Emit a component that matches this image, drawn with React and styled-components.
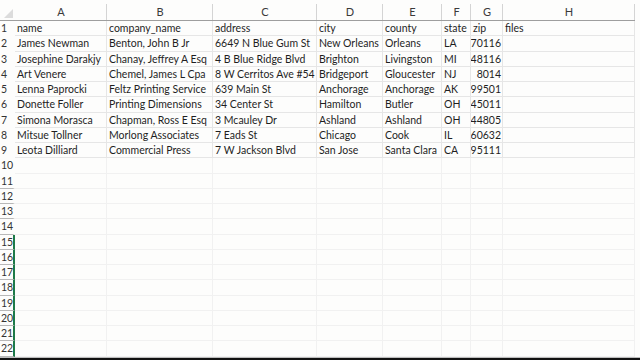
import React from "react";
import styled, {createGlobalStyle} from "styled-components";

const GlobalStyle = createGlobalStyle`
  html, body {
    margin: 0;
    padding: 0;
    background: #fdfdfc;
    overflow: hidden;
  }
`;

const COLS = ["A", "B", "C", "D", "E", "F", "G", "H"];
const WIDTHS = [92, 106, 104, 66, 59, 29, 32, 132];

const ROWS = [
    ["name", "company_name", "address", "city", "county", "state", "zip", "files"],
    ["James Newman", "Benton, John B Jr", "6649 N Blue Gum St", "New Orleans", "Orleans", "LA", 70116, ""],
    ["Josephine Darakjy", "Chanay, Jeffrey A Esq", "4 B Blue Ridge Blvd", "Brighton", "Livingston", "MI", 48116, ""],
    ["Art Venere", "Chemel, James L Cpa", "8 W Cerritos Ave #54", "Bridgeport", "Gloucester", "NJ", 8014, ""],
    ["Lenna Paprocki", "Feltz Printing Service", "639 Main St", "Anchorage", "Anchorage", "AK", 99501, ""],
    ["Donette Foller", "Printing Dimensions", "34 Center St", "Hamilton", "Butler", "OH", 45011, ""],
    ["Simona Morasca", "Chapman, Ross E Esq", "3 Mcauley Dr", "Ashland", "Ashland", "OH", 44805, ""],
    ["Mitsue Tollner", "Morlong Associates", "7 Eads St", "Chicago", "Cook", "IL", 60632, ""],
    ["Leota Dilliard", "Commercial Press", "7 W Jackson Blvd", "San Jose", "Santa Clara", "CA", 95111, ""],
];

const TOTAL_ROWS = 22;

const Page = styled.div`
  width: 640px;
  height: 360px;
  display: flex;
  flex-direction: column;
  font-family: Lato, "Open Sans", "Liberation Sans", sans-serif;
  color: #1f1f1f;
  background: #fdfdfc;
`;

const Sheet = styled.div`
  display: grid;
  grid-template-columns: 15px ${WIDTHS.map(w => `${w}px`).join(" ")};
  grid-template-rows: 21px repeat(${TOTAL_ROWS}, 15.25px);
  flex: 1;
  align-content: start;
`;

const Corner = styled.div`
  position: relative;
  border-bottom: 1px solid #9e9e9e;
  &::after {
    content: "";
    position: absolute;
    right: 2px;
    bottom: 2px;
    width: 0;
    height: 0;
    border-left: 9px solid transparent;
    border-bottom: 9px solid #dcdcdc;
  }
`;

const ColHead = styled.div`
  display: flex;
  align-items: center;
  justify-content: center;
  padding-top: 2px;
  font-size: 11px;
  color: #3a3a3a;
  border-bottom: 1px solid #9e9e9e;
  position: relative;
  &::after {
    content: "";
    position: absolute;
    right: 0;
    top: 4px;
    bottom: 0;
    width: 1px;
    background: #d4d4d4;
  }
`;

const RowHead = styled.div`
  display: flex;
  align-items: center;
  padding-left: 1px;
  font-size: 10.5px;
  color: #333;
  border-right: 2px solid ${p => (p.$selected ? "#1e7a48" : "transparent")};
  border-bottom: 1px solid ${p => (p.$marked ? "#b8b8b8" : "transparent")};
  box-sizing: border-box;
`;

const Cell = styled.div`
  display: flex;
  align-items: center;
  justify-content: ${p => (p.$right ? "flex-end" : "flex-start")};
  padding: ${p => (p.$right ? "0 1px 0 0" : "0 2px")};
  font-size: 10.5px;
  white-space: nowrap;
  overflow: hidden;
  box-sizing: border-box;
  border-right: 1px solid ${p => (p.$filled ? "#e6e6e6" : "#f1f1f1")};
  border-bottom: 1px solid ${p => (p.$filled ? "#e6e6e6" : "#f1f1f1")};
`;

const Value = styled.span`
  flex-shrink: 0;
`;

const BottomBar = styled.div`
  height: 3px;
  background: #111;
  border-top: 1px solid #bdbdbd;
`;

export default function App() {
    const rows = Array.from({length: TOTAL_ROWS}, (_, i) => ROWS[i] || null);
    return (
        <Page>
            <GlobalStyle/>
            <Sheet>
                <Corner/>
                {COLS.map(c => <ColHead key={c}>{c}</ColHead>)}
                {rows.map((row, i) => (
                    <React.Fragment key={i}>
                        <RowHead $selected={i >= 14} $marked={i >= 10}>{i + 1}</RowHead>
                        {COLS.map((c, j) => {
                            const v = row ? row[j] : "";
                            return (
                                <Cell key={c} $filled={!!row} $right={typeof v === "number"}>
                                    {v !== "" && <Value>{v}</Value>}
                                </Cell>
                            );
                        })}
                    </React.Fragment>
                ))}
            </Sheet>
            <BottomBar/>
        </Page>
    );
}
